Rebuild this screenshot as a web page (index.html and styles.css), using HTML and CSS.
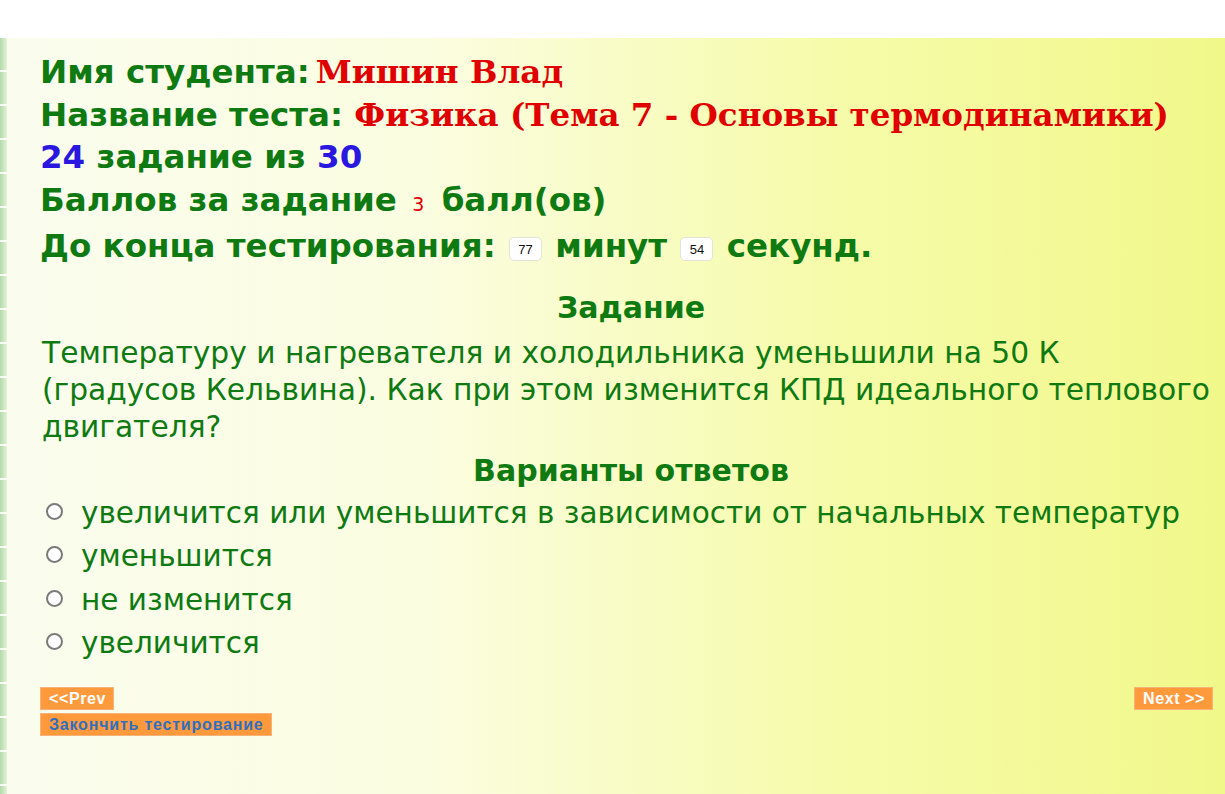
FILE: index.html
```html
<!DOCTYPE html>
<html lang="ru">
<head>
<meta charset="utf-8">
<title>Тест</title>
<link rel="stylesheet" href="styles.css">
</head>
<body>
<div class="topband"></div>
<div class="page">
  <div class="strip"></div>
  <div class="content">
    <div class="info">
      <div class="line">Имя студента:<span class="red first">Мишин Влад</span></div>
      <div class="line">Название теста: <span class="red">Физика (Тема 7 - Основы термодинамики)</span></div>
      <div class="line"><span class="blue">24</span> задание из <span class="blue">30</span></div>
      <div class="line">Баллов за задание <span class="pts">3</span> балл(ов)</div>
      <div class="line">До конца тестирования: <span class="badge">77</span> минут <span class="badge">54</span> секунд.</div>
    </div>
    <h2 class="title t1">Задание</h2>
    <p class="question">Температуру и нагревателя и холодильника уменьшили на 50 К (градусов Кельвина). Как при этом изменится КПД идеального теплового двигателя?</p>
    <h2 class="title t2">Варианты ответов</h2>
    <ul class="answers">
      <li><span class="radio"></span>увеличится или уменьшится в зависимости от начальных температур</li>
      <li><span class="radio"></span>уменьшится</li>
      <li><span class="radio"></span>не изменится</li>
      <li><span class="radio"></span>увеличится</li>
    </ul>
    <div class="nav">
      <div class="navleft">
        <span class="btn">&lt;&lt;Prev</span>
        <span class="btn finish">Закончить тестирование</span>
      </div>
      <span class="btn">Next &gt;&gt;</span>
    </div>
  </div>
</div>
</body>
</html>
```
FILE: styles.css
```css
html, body {
  margin: 0;
  padding: 0;
}
body {
  background: #ffffff;
  font-family: "DejaVu Sans", Verdana, sans-serif;
  color: #0f7a12;
}
.topband {
  height: 38px;
  background: #ffffff;
}
.page {
  display: flex;
  min-height: 756px;
  background: linear-gradient(to right, #fafdee 0%, #fbfde0 35%, #f6fbaa 68%, #f1f88a 100%);
}
.strip {
  width: 7px;
  flex: none;
  background:
    repeating-linear-gradient(to bottom, transparent 0, transparent 32px, rgba(255,255,255,0.85) 32px, rgba(255,255,255,0.85) 34px),
    linear-gradient(to right, #b2d9a8, #e4f2dc);
}
.content {
  flex: 1;
  padding: 13px 3px 0 33px;
  min-width: 0;
}
.info .line {
  font-weight: bold;
  font-size: 32.5px;
  line-height: 42.5px;
  white-space: nowrap;
}
.red {
  color: #e00000;
  font-family: "DejaVu Serif", Georgia, serif;
  font-size: 32.5px;
}
.red.first {
  margin-left: 6px;
}
.blue {
  color: #2a17e0;
}
.pts {
  color: #e00000;
  font-weight: normal;
  font-size: 19px;
  margin: 0 6px 0 4px;
}
.badge {
  display: inline-block;
  font-family: "Liberation Sans", Arial, sans-serif;
  font-weight: normal;
  font-size: 13px;
  color: #111;
  background: #ffffff;
  border: 1px solid #e3e3d8;
  border-radius: 5px;
  width: 33px;
  height: 24px;
  line-height: 24px;
  text-align: center;
  vertical-align: 3px;
  box-sizing: border-box;
  margin: 0 2px;
}
.title {
  text-align: center;
  font-size: 30px;
  font-weight: bold;
  margin: 0;
  line-height: 44px;
}
.t1 {
  margin-top: 18px;
}
.t2 {
  margin-top: 4px;
}
.question {
  margin: 4px 0 0 2px;
  font-size: 29.7px;
  line-height: 37px;
}
.answers {
  list-style: none;
  margin: -1px 0 0 0;
  padding: 0 0 0 6px;
}
.answers li {
  font-size: 29.5px;
  line-height: 43.5px;
  display: flex;
  align-items: center;
  white-space: nowrap;
}
.radio {
  width: 17px;
  height: 17px;
  border: 2px solid #7a7a7a;
  border-radius: 50%;
  background: #fff;
  box-sizing: border-box;
  margin-right: 18px;
  flex: none;
  position: relative;
  top: -2px;
}
.nav {
  display: flex;
  justify-content: space-between;
  align-items: flex-start;
  margin: 21px 9px 0 0;
}
.navleft {
  display: flex;
  flex-direction: column;
  align-items: flex-start;
  gap: 3px;
}
.btn {
  display: inline-block;
  background: #ff9a3c;
  color: #ffffff;
  font-family: "Liberation Sans", Arial, sans-serif;
  font-weight: bold;
  font-size: 16px;
  letter-spacing: 0.6px;
  line-height: 21px;
  padding: 0 7px 0 8px;
  border: 1px solid #f7b27a;
}
.btn.finish {
  color: #2f6fc0;
  letter-spacing: 0.8px;
}
```
